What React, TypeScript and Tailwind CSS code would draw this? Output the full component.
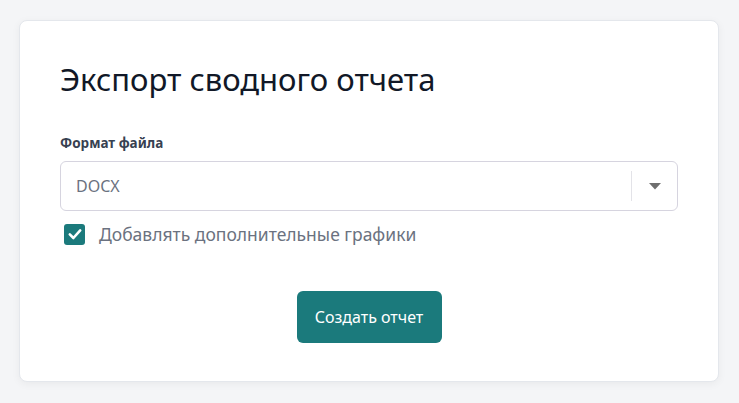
export default function App() {
  return (
    <div className="min-h-screen w-full bg-[#f4f5f7] px-[19px] pt-[20px] font-['Noto_Sans',sans-serif]">
      <div className="w-[700px] rounded-lg border border-[#e4e7ec] bg-white px-[40px] pt-[39px] pb-[38px] shadow-[0_2px_8px_rgba(0,0,0,0.05)]">
        {/* judul */}
        <h1 className="text-[31px] leading-[38px] font-normal text-[#111827]">
          Экспорт сводного отчета
        </h1>

        {/* format */}
        <div className="mt-[36px]">
          <label className="block text-[13.5px] leading-[18px] font-bold text-[#374151]">
            Формат файла
          </label>
          <div className="mt-[9px] flex h-[50px] items-center rounded-md border border-[#d6d4df] bg-white pl-[15px]">
            <span className="flex-1 text-[16px] text-[#6b7280]">DOCX</span>
            <div className="h-[30px] w-px bg-[#e3e3e8]" />
            <div className="flex w-[45px] items-center justify-center">
              <svg width="12" height="7" viewBox="0 0 12 7">
                <path d="M0 0 L12 0 L6 6.5 Z" fill="#6e6e6e" />
              </svg>
            </div>
          </div>
        </div>

        {/* checkbox */}
        <label className="mt-[11px] ml-[4px] flex items-center gap-[14px]">
          <span className="flex h-[21px] w-[21px] items-center justify-center rounded-[3px] bg-[#1b7a7c]">
            <svg width="16" height="16" viewBox="0 0 16 16" fill="none">
              <path d="M2.8 8.4 L6.4 12 L13.2 4.4" stroke="white" strokeWidth="2.6" strokeLinecap="round" strokeLinejoin="round" />
            </svg>
          </span>
          <span className="text-[17.5px] leading-[24px] text-[#6b7280]">
            Добавлять дополнительные графики
          </span>
        </label>

        {/* tombol */}
        <div className="mt-[45px] flex justify-center">
          <button className="h-[52px] w-[145px] rounded-md bg-[#1b7a7c] text-[16px] text-white">
            Создать отчет
          </button>
        </div>
      </div>
    </div>
  );
}
